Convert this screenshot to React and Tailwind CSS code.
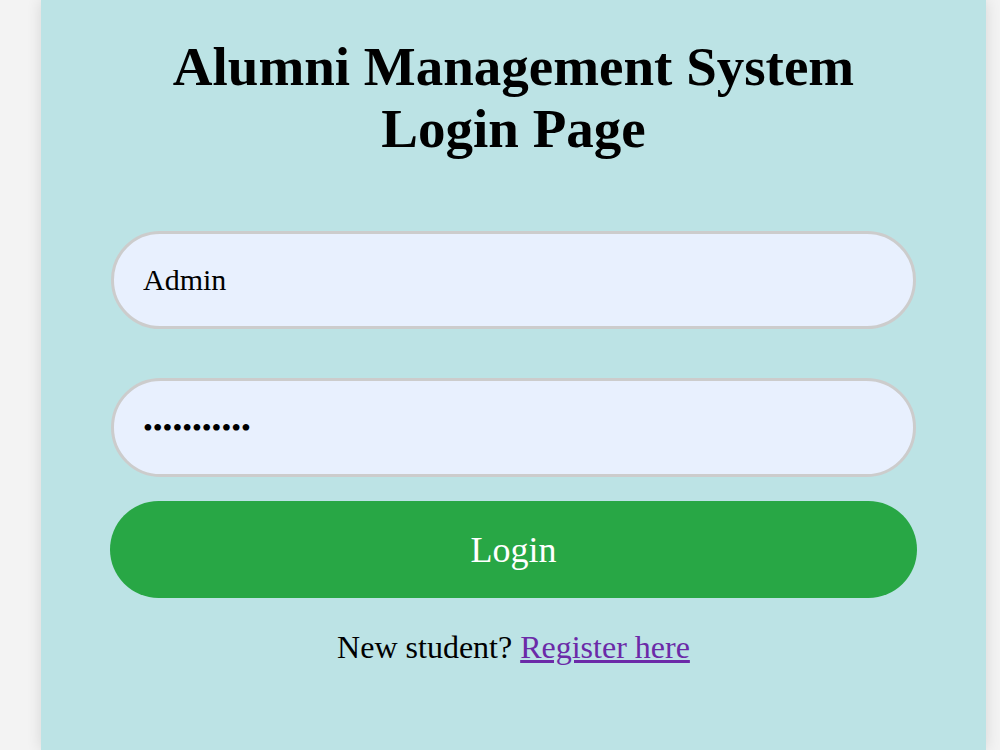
export default function App() {
  return (
    <div className="w-[1000px] h-[750px] overflow-hidden bg-[#f3f3f3]" style={{ fontFamily: '"Liberation Serif", "Times New Roman", serif' }}>
      <div className="ml-[41px] w-[945px] h-[750px] bg-[#bce3e5] shadow-[0_0_14px_rgba(0,0,0,0.12)] px-[70px] pt-[36px] flex flex-col">
        <h1 className="text-center font-bold text-[55px] leading-[62px] text-black">
          Alumni Management System
          <br />
          Login Page
        </h1>
        <input
          readOnly
          value="Admin"
          className="mt-[71px] h-[98px] w-full rounded-full border-[3px] border-[#cccccc] bg-[#e8f0fe] px-[29px] text-[30px] text-black outline-none"
          style={{ fontFamily: '"Liberation Serif", "Times New Roman", serif' }}
        />
        <input
          readOnly
          type="password"
          value="abcdefghijk"
          className="mt-[49px] h-[99px] w-full rounded-full border-[3px] border-[#cccccc] bg-[#e8f0fe] px-[29px] text-[28px] text-black outline-none"
          style={{ fontFamily: '"Liberation Serif", "Times New Roman", serif' }}
        />
        <button
          className="mt-[24px] h-[97px] w-full rounded-full bg-[#28a745] text-white text-[36px] -mx-px"
          style={{ width: 'calc(100% + 2px)', fontFamily: '"Liberation Serif", "Times New Roman", serif' }}
        >
          Login
        </button>
        <p className="mt-[31px] text-center text-[32px] leading-[36px] text-black">
          New student?{' '}
          <a href="#" className="text-[#6b2aa8] underline">Register here</a>
        </p>
      </div>
    </div>
  );
}
